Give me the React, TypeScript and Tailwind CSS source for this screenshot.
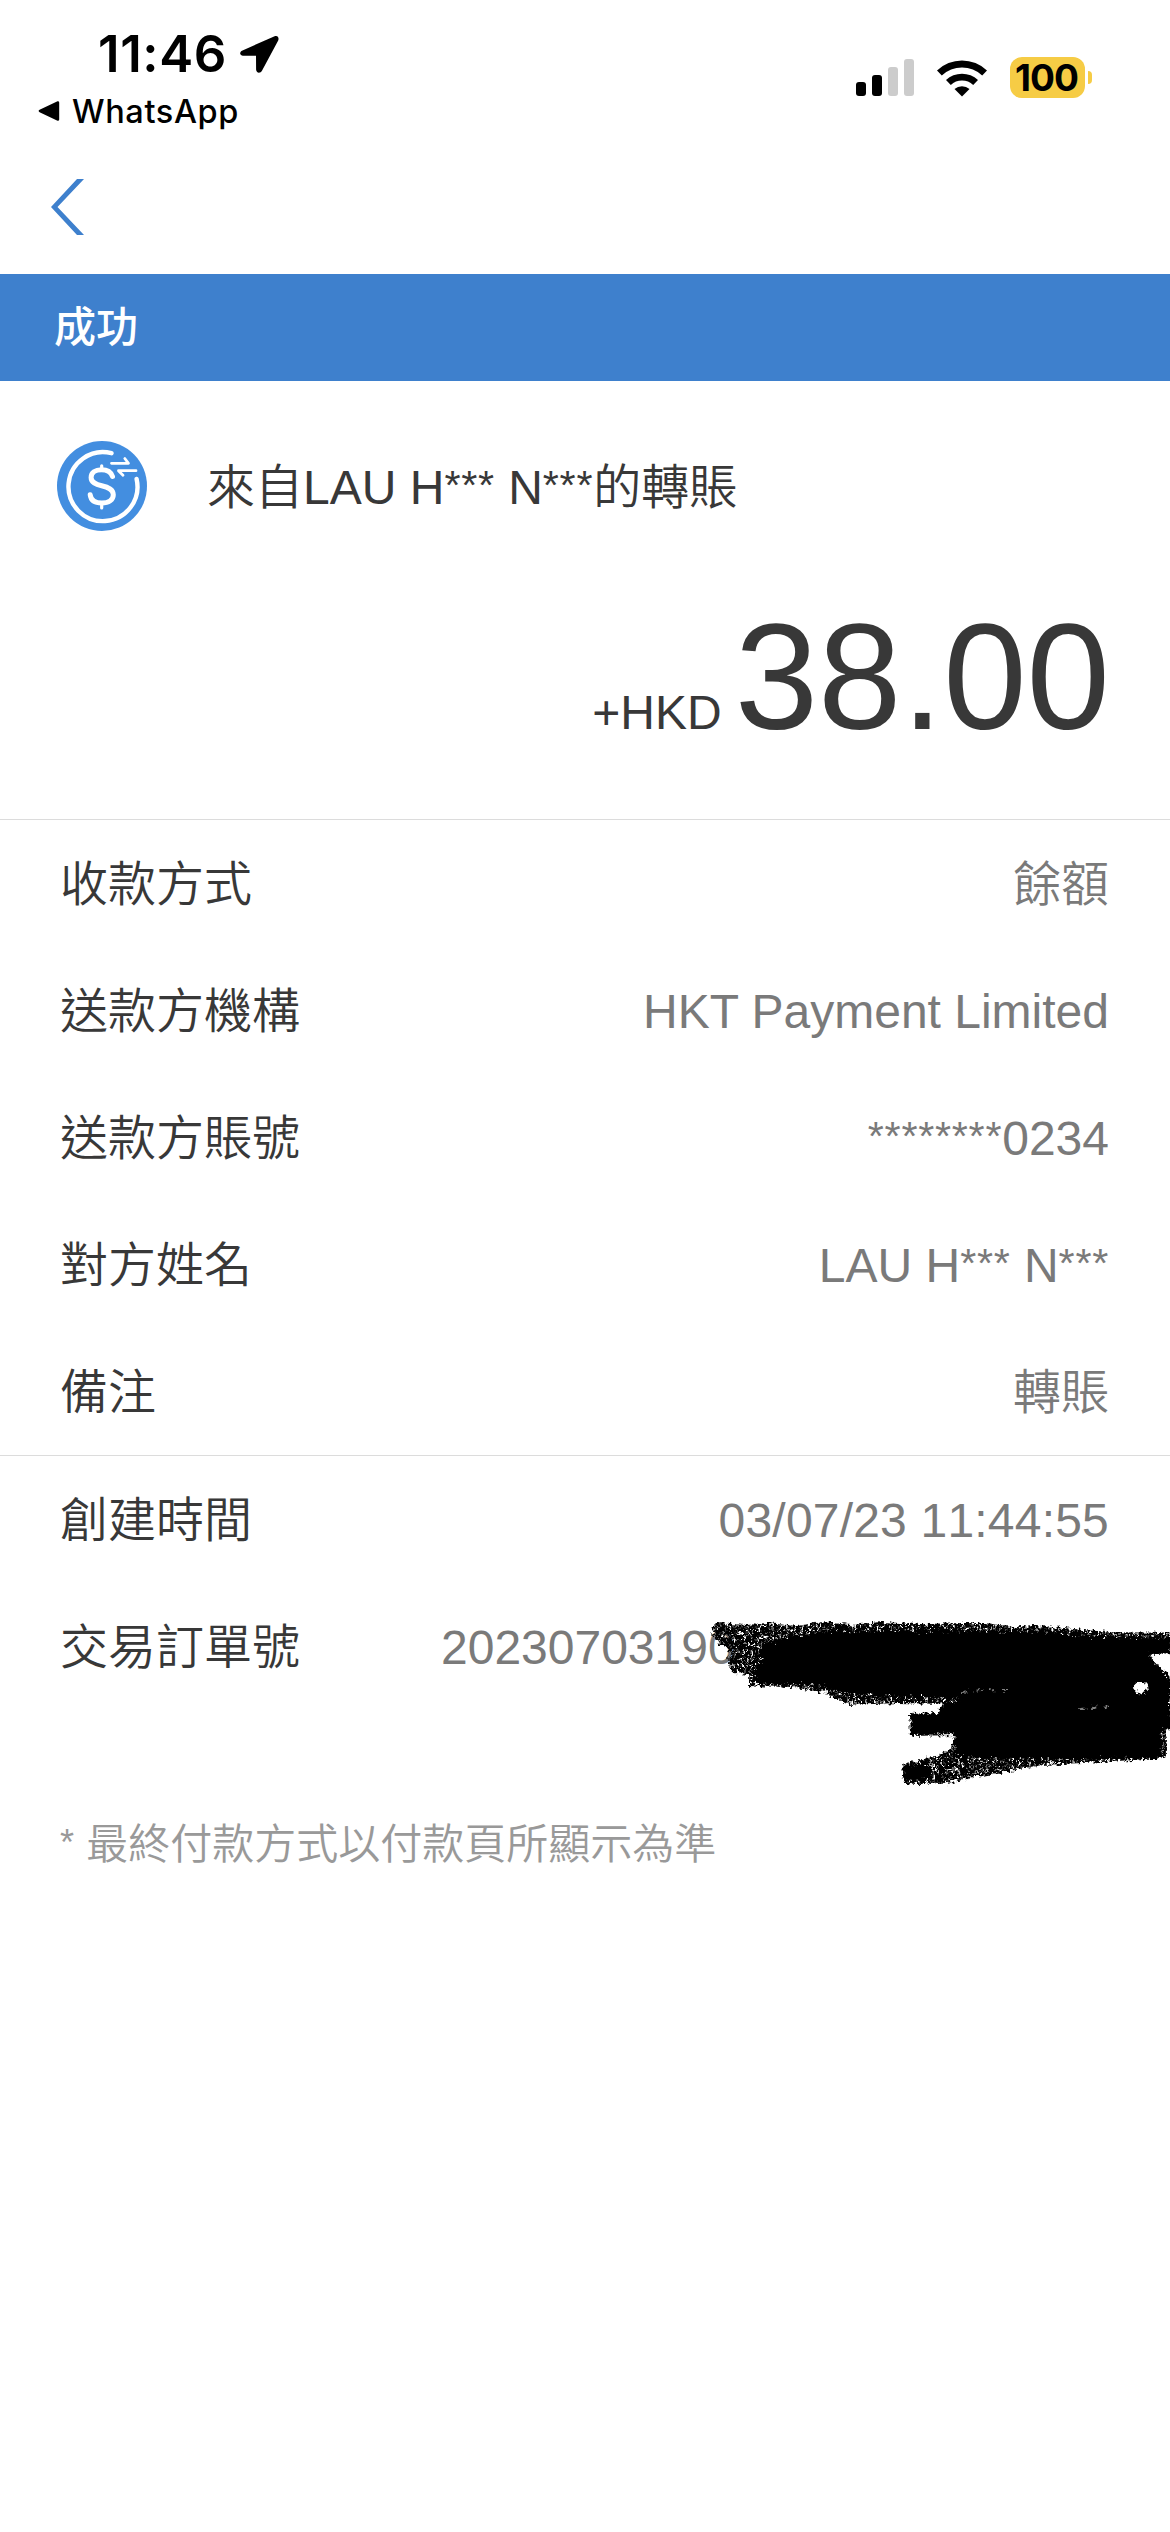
import { Fragment } from "react";

const details = [
  { label: "收款方式", value: "餘額" },
  { label: "送款方機構", value: "HKT Payment Limited" },
  { label: "送款方賬號", value: "********0234" },
  { label: "對方姓名", value: "LAU H*** N***" },
  { label: "備注", value: "轉賬" },
];

function StatusBar() {
  return (
    <div className="flex h-[144px] justify-between font-['Inter','Liberation_Sans',sans-serif] text-black">
      <div className="pl-[38px] pt-[28px]">
        <div className="flex h-[52px] items-center pl-[60px]">
          <span className="w-[141px] whitespace-nowrap text-[51px] font-semibold leading-[52px] tracking-[0.6px]">
            11:46
          </span>
          <svg className="h-[40px] w-[40px]" viewBox="0 0 40 40">
            <path
              d="M35.600 2.200 3.500 16.400C0 18 .6 21.600 4 21.700l13 .1.1 13.700c.1 3.700 4.300 4.300 6 .9L39.200 6.500C40.400 3.300 38.400 1 35.600 2.200Z"
              fill="#000"
            />
          </svg>
        </div>
        <div className="flex h-[62px] items-center">
          <svg className="h-[22px] w-[22px]" viewBox="0 0 22 22">
            <path d="M1.600 9.800 19 1.500c1.300-.5 2.200 0 2.200 1.300v16.400c0 1.400-1 1.800-2.200 1.200L1.600 12.200c-1.300-.7-1.300-1.800 0-2.400Z" />
          </svg>
          <span className="ml-[12px] mt-px text-[32.5px] font-medium leading-[60px] tracking-[0.6px]">
            WhatsApp
          </span>
        </div>
      </div>
      <div className="mt-[57px] flex h-[41px] items-center pr-[78px]">
        <svg className="h-[37px] w-[58px]" viewBox="0 0 58 37">
          <rect x="0" y="23" width="10" height="14" rx="3" />
          <rect x="16" y="16" width="10" height="21" rx="3" />
          <rect x="32" y="8" width="10" height="29" rx="3" fill="#ccc" />
          <rect x="48" y="0" width="10" height="37" rx="3" fill="#ccc" />
        </svg>
        <svg className="ml-[22px] h-[38px] w-[52px]" viewBox="0 0 52 38">
          <path d="M1 11.500a36 36 0 0 1 50 0l-4.800 5a29.500 29.500 0 0 0-40.400 0Z" />
          <path d="M10 21a23.500 23.500 0 0 1 32 0l-4.800 5a16.500 16.500 0 0 0-22.400 0Z" />
          <path d="M18.500 30a11.500 11.500 0 0 1 15 0L26 37.500Z" />
        </svg>
        <div className="ml-[22px] flex h-[41px] w-[75px] items-center justify-center rounded-[12px] bg-[#f6cc45] pr-[2px] text-[37px] font-bold leading-[41px] tracking-[-1px]">
          100
        </div>
        <div className="ml-[3px] h-[13px] w-[4px] rounded-r-full bg-[#f6cc45]" />
      </div>
    </div>
  );
}

function TransferIcon() {
  return (
    <svg className="h-[90px] w-[90px]" viewBox="0 0 90 90">
      <circle cx="45" cy="45" r="45" fill="#438ee0" />
      <g fill="none" stroke="#fff" strokeLinecap="round">
        <path d="M54.500 12.200A34.500 34.500 0 1 0 79.600 38" strokeWidth="4.400" />
        <path
          d="M55.500 35.500C54 31 50 28.800 44.500 28.800c-6.200 0-10.400 2.900-10.400 7.700 0 5 4.500 6.800 10.600 8.300 6.500 1.600 11.600 3.600 11.600 9 0 5-4.500 8.300-11.500 8.300-6.800 0-11-3-11.600-8.300"
          strokeWidth="5"
        />
        <path d="M44.700 24.800v4M44.700 62v5" strokeWidth="3.200" />
        <path d="M54.500 22.300H71.500L67.800 17.500M79 29.700H61.500l4.500 4.600" strokeWidth="2.800" strokeLinejoin="round" />
      </g>
    </svg>
  );
}

// masking stars are a little smaller than the rest and sit at cap height
function Masked({ text }: { text: string }) {
  return (
    <>
      {text.split(/(\*+)/).map((part, i) =>
        part.startsWith("*") ? (
          <span key={i} className="align-[0.11em] text-[0.86em] leading-none tracking-[0.018em]">
            {part}
          </span>
        ) : (
          <Fragment key={i}>{part}</Fragment>
        )
      )}
    </>
  );
}

function Row({ label, value, valueClass = "" }: { label: string; value: string; valueClass?: string }) {
  return (
    <div className="flex h-[127px] items-center justify-between pl-[60px] pr-[61px] pt-[3px]">
      <span className="text-[#383838]">{label}</span>
      <span className={`text-[#7a7a7a] ${valueClass}`}>
        <Masked text={value} />
      </span>
    </div>
  );
}

// charcoal marker strokes over the order number
function Scribble() {
  return (
    <svg
      className="absolute left-[700px] top-[1610px] h-[190px] w-[470px]"
      viewBox="700 1610 470 190"
    >
      <defs>
        <filter id="rough" x="-5%" y="-10%" width="110%" height="120%">
          <feTurbulence type="fractalNoise" baseFrequency="0.28" numOctaves="3" seed="4" />
          <feDisplacementMap in="SourceGraphic" scale="10" xChannelSelector="R" yChannelSelector="G" />
          <feGaussianBlur stdDeviation="0.6" />
        </filter>
        <filter id="grain" x="-5%" y="-10%" width="110%" height="120%">
          <feTurbulence type="fractalNoise" baseFrequency="0.28" numOctaves="2" seed="9" result="n" />
          <feColorMatrix in="n" type="matrix" values="0 0 0 0 0  0 0 0 0 0  0 0 0 0 0  5 0 0 0 -1.450" result="m" />
          <feComposite in="SourceGraphic" in2="m" operator="in" result="g" />
          <feDisplacementMap in="g" in2="n" scale="8" xChannelSelector="R" yChannelSelector="G" />
          <feGaussianBlur stdDeviation="0.6" />
        </filter>
      </defs>
      <path
        filter="url(#grain)"
        fillRule="evenodd"
        d="M713 1627l4-4 30 2 20-2 30 3 24-4 30 3 30-3 40 2 40-1 25 0 26 4 22-2 50 5 26 2 62 1v20l-23 1 8 11 10 8 8 6v49l-10 1 2 25-5 4-60 4-60 3-60 11-40 8-38 0-2-20 12-2 25-7 13-7 2-13-43 1-1-22 29 1 2-11-42-1-50 2-14-7-11-6-35-5-40-1 0-11-16-2-5-11 1-13-9-5-8-10zM1132 1687c4-8 12-5 17-1-3 7-11 12-17 1z"
      />
      <path
        filter="url(#rough)"
        fillRule="evenodd"
        d="M762 1645l30-9 48-5 60 1 70-1 70 1 60 5 70 2v14l-23 2 8 11 9 8 6 7v47l-10 1 2 25-6 4-60 1-60 0-55-1-24-1-2-24-43 1-1-20 29-1 3-9 20-5-40-2-70-3-14-2-12-6-35-3-34 0-6-13 12-9-6-7zM1132 1687c4-8 12-5 17-1-3 7-11 12-17 1z"
      />
      <path filter="url(#rough)" d="M904 1766l22-2 8 8-8 7-22 1z" />
      {/* lighter patches where the strokes barely overlap */}
      <g fill="none" stroke="#fff" strokeLinecap="round" opacity=".5" filter="url(#grain)">
        <path d="M962 1692l22-2 30 1" strokeWidth="2" strokeDasharray="5 9" />
        <path d="M1080 1709l32-3" strokeWidth="2" strokeDasharray="6 5" />
      </g>
    </svg>
  );
}

export default function App() {
  return (
    <div className="relative h-[2532px] w-[1170px] overflow-hidden bg-white font-['Liberation_Sans','Noto_Sans_CJK_TC',sans-serif] text-[48px] font-[350]">
      <StatusBar />

      <div className="flex h-[130px] pl-[50px] pt-[35px]">
        <svg className="h-[56px] w-[35px]" viewBox="0 0 35 56">
          <path d="M27 0h7L7.500 28 34 56h-7L1 28Z" fill="#3e80cd" />
        </svg>
      </div>

      <div className="flex h-[107px] items-center bg-[#3e80cd] pl-[54px] text-[42px] font-medium text-white">
        成功
      </div>

      <div className="h-[438px]">
        <div className="flex pl-[57px] pt-[60px]">
          <TransferIcon />
          <h1 className="ml-[60px] mt-[2px] h-[88px] leading-[90px] text-[#383838]">
            <Masked text="來自LAU H*** N***的轉賬" />
          </h1>
        </div>
        <div className="flex items-baseline justify-end pr-[60px] pt-[56px] leading-[180px] text-[#383838]">
          <span>+HKD</span>
          <span className="ml-[13px] text-[150px] leading-[180px]">38.00</span>
        </div>
      </div>

      <section className="border-t border-[#dcdcdc]">
        {details.map((item) => (
          <Row key={item.label} label={item.label} value={item.value} />
        ))}
      </section>

      <section className="border-t border-[#dcdcdc]">
        <Row label="創建時間" value="03/07/23 11:44:55" valueClass="tracking-[0.2px] [font-kerning:none]" />
        <Row label="交易訂單號" value="20230703190" valueClass="w-[668px]" />
      </section>

      <p className="mt-[103px] pl-[60px] text-[42px] leading-[64px] text-[#999]">
        <Masked text="* 最終付款方式以付款頁所顯示為準" />
      </p>

      <Scribble />
    </div>
  );
}
